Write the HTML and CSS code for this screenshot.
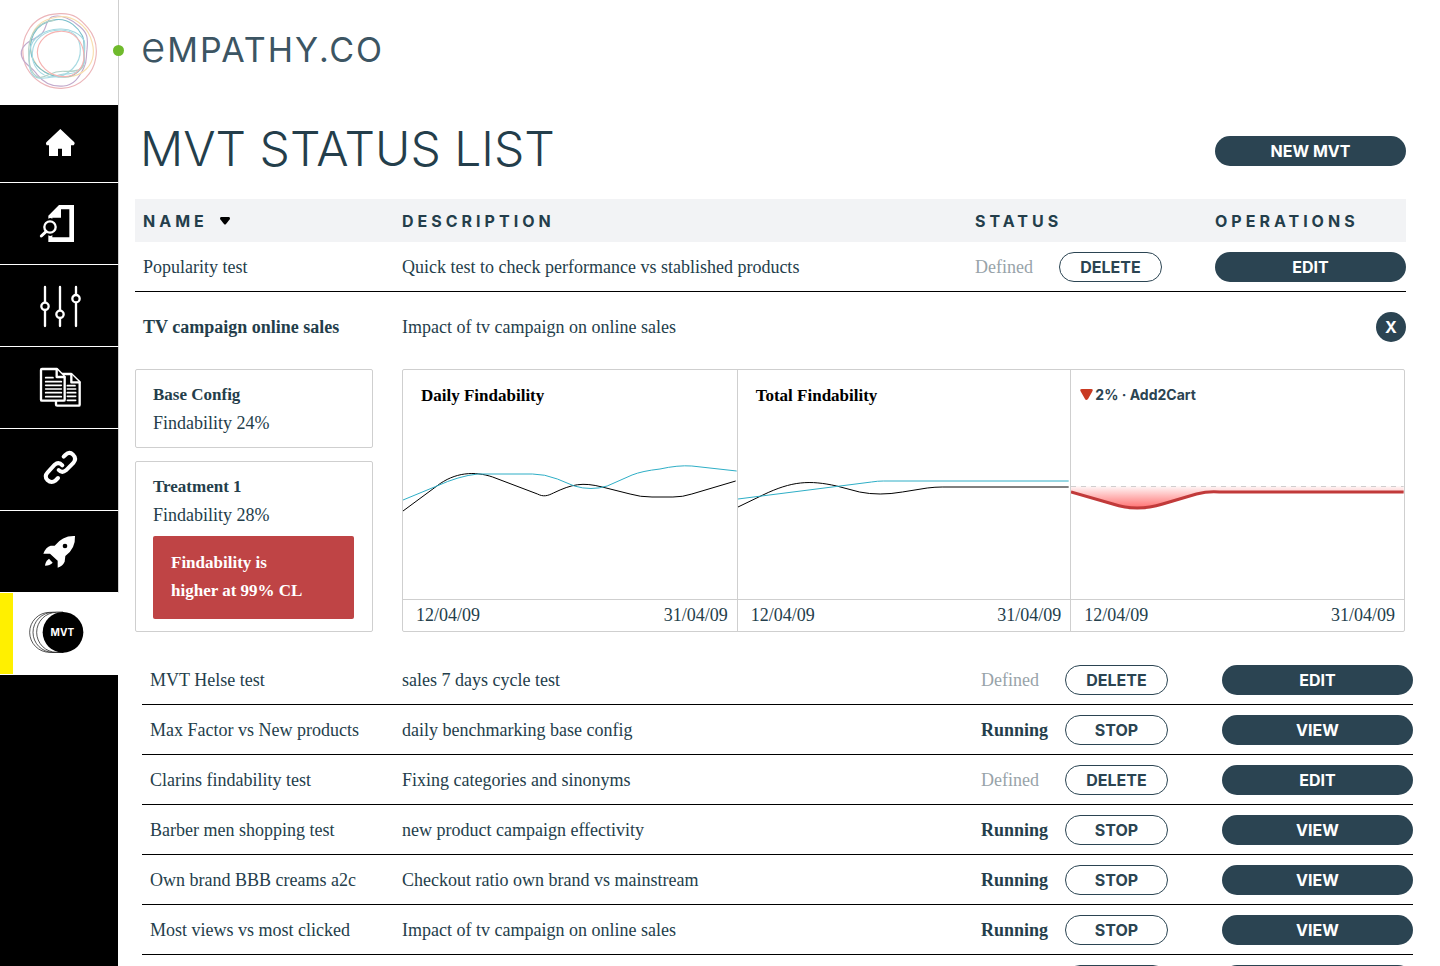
FILE: index.html
```html
<!DOCTYPE html>
<html lang="en">
<head>
<meta charset="utf-8">
<title>MVT Status List</title>
<link rel="stylesheet" href="styles.css">
</head>
<body>
<div class="app">
  <aside class="sidebar">
    <a class="brand" href="#" aria-label="Empathy.co home">
      <svg class="brand-mark" viewBox="6 12 252 252" fill="none" stroke-width="3.4">
        <path stroke="#e9a9ae" d="M134 26C178 24 196 42 218 68C240 94 248 126 242 160C236 200 200 248 140 250C92 252 54 222 36 190C18 156 20 110 38 80C58 42 96 27 134 26Z"/>
        <path stroke="#b79cc4" d="M110 36C90 46 96 76 76 90C58 104 24 112 19 140C15 172 50 184 66 208C86 234 116 246 146 243C176 240 192 218 206 190C218 166 212 160 216 134C220 96 216 84 196 66C172 44 138 26 110 36Z"/>
        <path stroke="#f8d9a0" d="M128 36C176 28 214 66 226 96C242 138 236 170 214 192C186 220 140 222 100 206C62 190 44 150 46 116C50 66 84 42 128 36Z"/>
        <path stroke="#62b3c2" d="M124 44C164 40 190 70 202 92C212 112 204 136 208 164C206 194 176 216 150 216C110 218 64 196 50 154C40 114 50 54 124 44Z"/>
        <path stroke="#93d1dc" d="M134 72C166 70 198 88 208 108C212 128 206 150 208 172C202 196 178 208 146 207C116 212 94 226 66 218C40 210 40 166 44 138C50 94 88 74 134 72Z"/>
        <path stroke="#98d4de" d="M138 75C176 76 194 96 196 132C198 176 160 218 112 216C76 214 50 184 52 144C54 104 88 74 138 75Z"/>
        <path stroke="#a5c9bd" d="M118 46C72 48 44 84 41 132C40 176 48 212 74 218C104 214 110 196 150 199C180 200 202 196 206 180"/>
        <path stroke="#f5a5a3" d="M134 79C176 76 204 108 207 150C208 190 180 216 146 215C104 214 68 182 67 142C68 108 98 80 134 79Z"/>
      </svg>
    </a>
    <nav class="nav" aria-label="Main">
      <a class="nav-item nav-item-home" href="#" aria-label="Home">
        <svg class="nav-icon" viewBox="105 60 144 144"><path fill="#fff" d="M181 87L223 127Q226 132 221 136H213V168H186V146H174V168H147V136H140Q136 132 139 127Z"/></svg>
      </a>
      <a class="nav-item" href="#" aria-label="Search documents">
        <svg class="nav-icon" viewBox="105 300 144 144"><path fill="#fff" d="M177 315H222V426H145V406Q152 410 157 405V412H208V328H183V353H157V356Q151 352 145 356V347Z"/><g fill="none" stroke="#fff"><circle cx="150" cy="381" r="17" stroke-width="7"/><path d="M138 395L124 408" stroke-width="9" stroke-linecap="round"/></g></svg>
      </a>
      <a class="nav-item" href="#" aria-label="Settings">
        <svg class="nav-icon" viewBox="105 546 144 144" fill="#000" stroke="#fff" stroke-width="7" stroke-linecap="round"><path d="M135 561V678M180 561V678M228 561V678"/><circle cx="135" cy="619" r="11"/><circle cx="180" cy="643" r="11"/><circle cx="228" cy="596" r="11"/></svg>
      </a>
      <a class="nav-item" href="#" aria-label="Content">
        <svg class="nav-icon" viewBox="105 57 144 144" fill="#000" stroke="#fff" stroke-linejoin="round" stroke-linecap="round"><path stroke-width="7" d="M168 87H214L239 111V179Q239 182 236 182H172Q168 182 168 178Z"/><path stroke-width="7" d="M214 88V112H238"/><path stroke-width="5" d="M202 122H225M202 132H227M202 143H227M202 154H227M202 166H227"/><path stroke-width="7" d="M126 72H171L194 96V164Q194 167 191 167H126Q123 167 123 164V75Q123 72 126 72Z"/><path stroke-width="7" d="M170 73V96H193"/><path stroke-width="5" d="M137 98H159M137 110H184M137 121H184M137 132H184M137 143H184M137 155H184"/></svg>
      </a>
      <a class="nav-item" href="#" aria-label="Links">
        <svg class="nav-icon" viewBox="105 303 144 144" fill="none" stroke="#fff" stroke-width="12" stroke-linecap="round"><path d="M191 335L196 330Q208 318 219 329Q231 341 220 354L198 376Q186 386 176 375"/><path d="M187 361Q176 349 164 359L143 382Q132 394 142 405Q154 416 166 407L174 399"/></svg>
      </a>
      <a class="nav-item" href="#" aria-label="Launch">
        <svg class="nav-icon" viewBox="105 549 144 144" fill="#fff"><path fill-rule="evenodd" d="M225 573Q188 571 164 602H152Q138 605 130 626H150L173 647V668Q188 663 194 650L196 633Q227 611 225 573ZM195 596A7 7 0 1 0 195 610A7 7 0 1 0 195 596Z"/><path d="M147 641L158 653Q150 662 135 662Q136 649 147 641Z"/></svg>
      </a>
      <a class="nav-item nav-item-active" href="#" aria-current="page">
        <svg class="nav-icon nav-icon-wide" viewBox="86 795 180 144"><g fill="#fff" stroke="#000" stroke-width="2"><path d="M188 802H148A60 60 0 0 0 148 922H188Z"/><path d="M188 802H158A60 60 0 0 0 158 922H188Z"/><path d="M188 802H169A60 60 0 0 0 169 922H188Z"/></g><circle cx="188" cy="862" r="61"/><text class="mvt-text" x="186" y="873" text-anchor="middle">MVT</text></svg>
      </a>
    </nav>
    <div class="sidebar-rest"></div>
    <span class="status-dot"></span>
  </aside>

  <main class="main">
    <header class="topbar"><span class="wordmark"><span class="wordmark-e">e</span>MPATHY.CO</span></header>
    <div class="title-row">
      <h1 class="title">MVT STATUS LIST</h1>
      <button class="btn btn-primary" type="button">NEW MVT</button>
    </div>

    <table class="tests">
      <colgroup><col class="col-name"><col><col class="col-status"><col class="col-ops"></colgroup>
      <thead>
        <tr><th scope="col">NAME<svg class="sort" viewBox="0 0 10 8"><path d="M1 0H9Q10 0 10 2L6 7Q5 8 4 7L0 2Q0 0 1 0Z"/></svg></th><th scope="col">DESCRIPTION</th><th scope="col">STATUS</th><th scope="col">OPERATIONS</th></tr>
      </thead>
      <tbody>
        <tr><td>Popularity test</td><td>Quick test to check performance vs stablished products</td><td><div class="status"><span class="state">Defined</span><button class="btn btn-outline" type="button">DELETE</button></div></td><td><button class="btn btn-primary" type="button">EDIT</button></td></tr>
      </tbody>
    </table>

    <section class="detail">
      <div class="detail-head">
        <h2 class="detail-name">TV campaign online sales</h2>
        <p class="detail-desc">Impact of tv campaign on online sales</p>
        <button class="btn btn-close" type="button" aria-label="Close details">X</button>
      </div>
      <div class="detail-body">
        <div class="configs">
          <article class="card"><h3>Base Config</h3><p>Findability 24%</p></article>
          <article class="card card-grow"><h3>Treatment 1</h3><p>Findability 28%</p><p class="alert">Findability is<br>higher at 99% CL</p></article>
        </div>
        <div class="charts">
          <figure class="chart">
            <figcaption class="chart-title">Daily Findability</figcaption>
            <svg class="plot" viewBox="0 0 335 189" preserveAspectRatio="none" fill="none">
              <path stroke="#000" d="M0 101L34 76C52 62 72 61 90 67L135 84C141 87 145 86 151 83C170 74 180 72 200 77L228 84Q238 87 250 87H271Q281 87 290 84L334 71"/>
              <path stroke="#2eaec6" d="M0 90L34 76Q56 66 75 64H130Q142 64 155 69L172 76Q189 81 205 76L230 65Q240 61 258 59Q276 55 290 56L335 61"/>
            </svg>
            <div class="axis"><span>12/04/09</span><span>31/04/09</span></div>
          </figure>
          <figure class="chart">
            <figcaption class="chart-title">Total Findability</figcaption>
            <svg class="plot" viewBox="0 0 334 189" preserveAspectRatio="none" fill="none">
              <path stroke="#000" d="M0 97L25 85C54 71 72 70 99 76L122 82Q142 86 165 82L190 78Q198 77 205 77H332"/>
              <path stroke="#2eaec6" d="M0 89L134 72Q140 71 146 71H332"/>
            </svg>
            <div class="axis"><span>12/04/09</span><span>31/04/09</span></div>
          </figure>
          <figure class="chart">
            <figcaption class="chart-title chart-title-kpi"><svg class="drop" viewBox="0 0 13 12"><path d="M2 0H11Q14 0 12 3L8 10Q6 12 5 10L1 3Q-1 0 2 0Z"/></svg>2% · Add2Cart</figcaption>
            <svg class="plot" viewBox="0 0 334 189" preserveAspectRatio="none" fill="none">
              <defs><linearGradient id="loss" gradientUnits="userSpaceOnUse" x1="0" y1="76" x2="0" y2="97"><stop offset="0" stop-color="#ff7676" stop-opacity="0.05"/><stop offset="1" stop-color="#ff7676"/></linearGradient></defs>
              <path fill="url(#loss)" d="M0 76H334V82H149Q138 82 126 85L92 95Q66 101 42 95L0 82Z"/>
              <path stroke="#cfcfcf" stroke-dasharray="5 5" d="M0 76.500H334"/>
              <path class="line-loss" stroke="#c13a3a" d="M0 82L42 94Q66 102 92 94L126 84Q138 81 149 82H334"/>
            </svg>
            <div class="axis"><span>12/04/09</span><span>31/04/09</span></div>
          </figure>
        </div>
      </div>
    </section>

    <table class="tests tests-more">
      <colgroup><col class="col-name"><col><col class="col-status"><col class="col-ops"></colgroup>
      <tbody>
        <tr><td>MVT Helse test</td><td>sales 7 days cycle test</td><td><div class="status"><span class="state">Defined</span><button class="btn btn-outline" type="button">DELETE</button></div></td><td><button class="btn btn-primary" type="button">EDIT</button></td></tr>
        <tr><td>Max Factor vs New products</td><td>daily benchmarking base config</td><td><div class="status"><span class="state state-running">Running</span><button class="btn btn-outline" type="button">STOP</button></div></td><td><button class="btn btn-primary" type="button">VIEW</button></td></tr>
        <tr><td>Clarins findability test</td><td>Fixing categories and sinonyms</td><td><div class="status"><span class="state">Defined</span><button class="btn btn-outline" type="button">DELETE</button></div></td><td><button class="btn btn-primary" type="button">EDIT</button></td></tr>
        <tr><td>Barber men shopping test</td><td>new product campaign effectivity</td><td><div class="status"><span class="state state-running">Running</span><button class="btn btn-outline" type="button">STOP</button></div></td><td><button class="btn btn-primary" type="button">VIEW</button></td></tr>
        <tr><td>Own brand BBB creams a2c</td><td>Checkout ratio own brand vs mainstream</td><td><div class="status"><span class="state state-running">Running</span><button class="btn btn-outline" type="button">STOP</button></div></td><td><button class="btn btn-primary" type="button">VIEW</button></td></tr>
        <tr><td>Most views vs most clicked</td><td>Impact of tv campaign on online sales</td><td><div class="status"><span class="state state-running">Running</span><button class="btn btn-outline" type="button">STOP</button></div></td><td><button class="btn btn-primary" type="button">VIEW</button></td></tr>
        <tr><td></td><td></td><td><div class="status"><span class="state"></span><button class="btn btn-outline" type="button"></button></div></td><td><button class="btn btn-primary" type="button"></button></td></tr>
      </tbody>
    </table>
  </main>
</div>
</body>
</html>
```
FILE: styles.css
```css
:root {
  --ink: #243e4b;
  --fill: #2b4452;
  --line: #cfcfcf;
  --sans: Inter, "Liberation Sans", sans-serif;
  --serif: "Liberation Serif", serif;
}
* { box-sizing: border-box; }
body {
  margin: 0;
  background: #fff;
  color: var(--ink);
  font: 18px/28px var(--serif);
}
h1, h2, h3, p, figure { margin: 0; }

.app { display: flex; height: 100vh; overflow: hidden; }

/* Sidebar */
.sidebar { position: relative; flex: none; width: 119px; display: flex; flex-direction: column; }
.brand {
  flex: none;
  height: 105px;
  padding: 9px 0 0 17px;
  border-right: 1px solid var(--line);
}
.brand-mark { display: block; width: 84px; height: 84px; opacity: 0.85; }
.nav-item {
  display: flex;
  align-items: center;
  justify-content: center;
  height: 82px;
  background: #000;
  background-clip: padding-box;
  border-right: 1px solid var(--line);
  border-bottom: 1px solid #fff;
}
.nav-item-home { height: 78px; }
.nav-item-active { background: #fff; border-right-color: #fff; box-shadow: inset 13px 0 #fff000; }
.nav-icon { display: block; width: 48px; height: 48px; }
.nav-icon-wide { width: 60px; }
.mvt-text { fill: #fff; font: 700 30px var(--sans); }
.sidebar-rest { flex: 1; margin-right: 1px; background: #000; }
.status-dot {
  position: absolute;
  top: 45px;
  right: -5px;
  width: 11px;
  height: 11px;
  border-radius: 50%;
  background: #6fba2c;
}

/* Main column */
.main { flex: 1; min-width: 0; padding: 0 34px 0 16px; }
.topbar { display: flex; align-items: center; height: 100px; padding: 0 0 4px 6px; }
.wordmark { font: 400 34px/40px var(--sans); letter-spacing: 2px; color: #3c5563; }
.wordmark-e { font-size: 42px; font-weight: 300; }
.title-row { display: flex; align-items: center; justify-content: space-between; height: 99px; padding: 2px 0 0 5px; }
.title { padding-bottom: 4px; font: 300 48px/60px var(--sans); }

.btn {
  display: block;
  height: 30px;
  padding: 0;
  border: 0;
  border-radius: 15px;
  font: 700 16px/30px var(--sans);
  text-align: center;
}
.btn-primary { width: 191px; background: var(--fill); color: #fff; }
.btn-outline { width: 103px; border: 1px solid var(--fill); background: #fff; color: var(--fill); line-height: 28px; }
.btn-close { width: 30px; background: var(--fill); color: #fff; }

/* Test tables */
.tests { width: 100%; border-collapse: separate; border-spacing: 0; table-layout: fixed; }
.col-name { width: 267px; }
.col-status { width: 240px; }
.col-ops { width: 191px; }
.tests th {
  height: 43px;
  padding: 0;
  background: #f2f3f5;
  font: 700 16px/24px var(--sans);
  letter-spacing: 4px;
  text-align: left;
}
.tests td { height: 50px; padding: 10px 0 9px; border-bottom: 1px solid #000; white-space: nowrap; }
.tests th:first-child, .tests td:first-child { padding-left: 8px; }
.sort { width: 10px; height: 8px; margin-left: 12px; vertical-align: 2px; }
.status { display: flex; align-items: center; }
.state { width: 84px; color: #98a3a9; }
.state-running { color: var(--ink); font-weight: 700; }
.tests-more { margin: 23px 0 0 7px; }
.tests-more .col-name { width: 260px; }
.tests-more .col-status { width: 241px; }

/* Expanded test */
.detail-head { display: grid; grid-template-columns: 259px 1fr auto; align-items: center; padding: 20px 0 27px 8px; }
.detail-name { font: inherit; font-weight: 700; white-space: nowrap; }
.detail-body { display: grid; grid-template-columns: 238px 1fr; gap: 29px; padding-right: 1px; }
.configs { display: flex; flex-direction: column; gap: 13px; }
.card { padding: 11px 18px 10px 17px; border: 1px solid var(--line); border-radius: 2px; }
.card-grow { flex: 1; }
.card h3 { font: 700 17px/28px var(--serif); }
.alert { margin-top: 7px; padding: 13px 18px 14px; border-radius: 2px; background: #bf4445; color: #fff; font-size: 17px; font-weight: 700; }

.charts { display: grid; grid-template-columns: repeat(3, 1fr); border: 1px solid var(--line); border-radius: 2px; }
.chart { display: flex; flex-direction: column; min-width: 0; }
.chart + .chart { border-left: 1px solid var(--line); }
.chart-title { padding: 12px 18px 0; color: #000; font-size: 17px; font-weight: 700; }
.chart-title-kpi { display: flex; align-items: center; gap: 2px; padding: 11px 9px 1px; color: var(--fill); font: 700 14px/28px var(--sans); }
.drop { width: 13px; height: 12px; fill: #c93a22; }
.plot { display: block; width: 100%; height: 189px; }
.plot path { vector-effect: non-scaling-stroke; }
.plot .line-loss { stroke-width: 3px; }
.axis { display: flex; justify-content: space-between; padding: 0 9px 0 13px; border-top: 1px solid var(--line); line-height: 31px; }
```
